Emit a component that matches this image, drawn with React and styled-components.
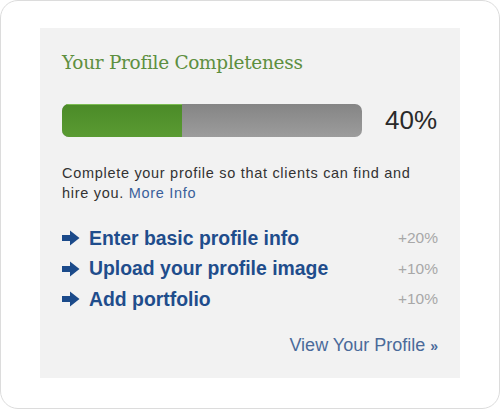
import React from "react";
import styled, { createGlobalStyle } from "styled-components";

const Global = createGlobalStyle`
    html, body {
        margin: 0;
        padding: 0;
        background: #fff;
    }
`;

const Frame = styled.div`
    box-sizing: border-box;
    width: 500px;
    height: 409px;
    border: 1px solid #dcdcdc;
    border-radius: 18px;
    background: #fff;
    padding: 27px 39px 0 39px;
    font-family: "Liberation Sans", Arial, sans-serif;
`;

const Panel = styled.div`
    box-sizing: border-box;
    width: 420px;
    height: 350px;
    background: #f2f2f2;
    padding: 22px 22px 0 22px;
`;

const Title = styled.h2`
    margin: 0;
    font-family: "DejaVu Serif", Georgia, serif;
    font-weight: normal;
    font-size: 18.5px;
    letter-spacing: -0.3px;
    color: #5d8f40;
    line-height: 26px;
`;

const ProgressRow = styled.div`
    display: flex;
    align-items: center;
    margin-top: 28px;
`;

const Track = styled.div`
    width: 300px;
    height: 33px;
    border-radius: 7px;
    background: linear-gradient(#858585, #9c9c9c);
    overflow: hidden;
    display: flex;
`;

const Fill = styled.div`
    height: 100%;
    background: linear-gradient(#4b8a28, #5a9b32);
    box-shadow: inset 0 1px 0 #7cbc52;
`;

const Percent = styled.div`
    margin-left: 23px;
    font-size: 26px;
    color: #2a2a2a;
`;

const Blurb = styled.p`
    margin: 26px 0 0 0;
    font-size: 14.5px;
    letter-spacing: 0.7px;
    line-height: 20px;
    color: #333;
    width: 356px;

    a {
        color: #3a5f9a;
        text-decoration: none;
    }
`;

const TaskList = styled.ul`
    list-style: none;
    margin: 20px 0 0 0;
    padding: 0;
`;

const Task = styled.li`
    display: flex;
    align-items: center;
    height: 30.5px;
`;

const TaskLink = styled.a`
    flex: 1;
    display: flex;
    align-items: center;
    gap: 9px;
    font-size: 19.4px;
    font-weight: bold;
    color: #1f4d8c;
    text-decoration: none;
`;

const Gain = styled.span`
    font-size: 15.5px;
    color: #a8a8a8;
`;

const Footer = styled.div`
    margin-top: 20px;
    text-align: right;
    font-size: 18px;
    color: #4a6a9a;

    b {
        font-size: 14px;
    }
`;

const Arrow = () => (
    <svg width="18" height="16" viewBox="0 0 18 16">
        <path d="M0 5 H8 V0.5 L17.5 8 L8 15.5 V11 H0 Z" fill="#1b4a8a" />
    </svg>
);

const tasks = [
    { label: "Enter basic profile info", gain: "+20%" },
    { label: "Upload your profile image", gain: "+10%" },
    { label: "Add portfolio", gain: "+10%" },
];

export default function App() {
    const progress = 40;
    return (
        <Frame>
            <Global />
            <Panel>
                <Title>Your Profile Completeness</Title>
                <ProgressRow>
                    <Track>
                        <Fill style={{ width: `${progress}%` }} />
                    </Track>
                    <Percent>{progress}%</Percent>
                </ProgressRow>
                <Blurb>
                    Complete your profile so that clients can find and hire
                    you. <a href="#">More Info</a>
                </Blurb>
                <TaskList>
                    {tasks.map((t) => (
                        <Task key={t.label}>
                            <TaskLink href="#">
                                <Arrow />
                                {t.label}
                            </TaskLink>
                            <Gain>{t.gain}</Gain>
                        </Task>
                    ))}
                </TaskList>
                <Footer>
                    View Your Profile <b>»</b>
                </Footer>
            </Panel>
        </Frame>
    );
}
